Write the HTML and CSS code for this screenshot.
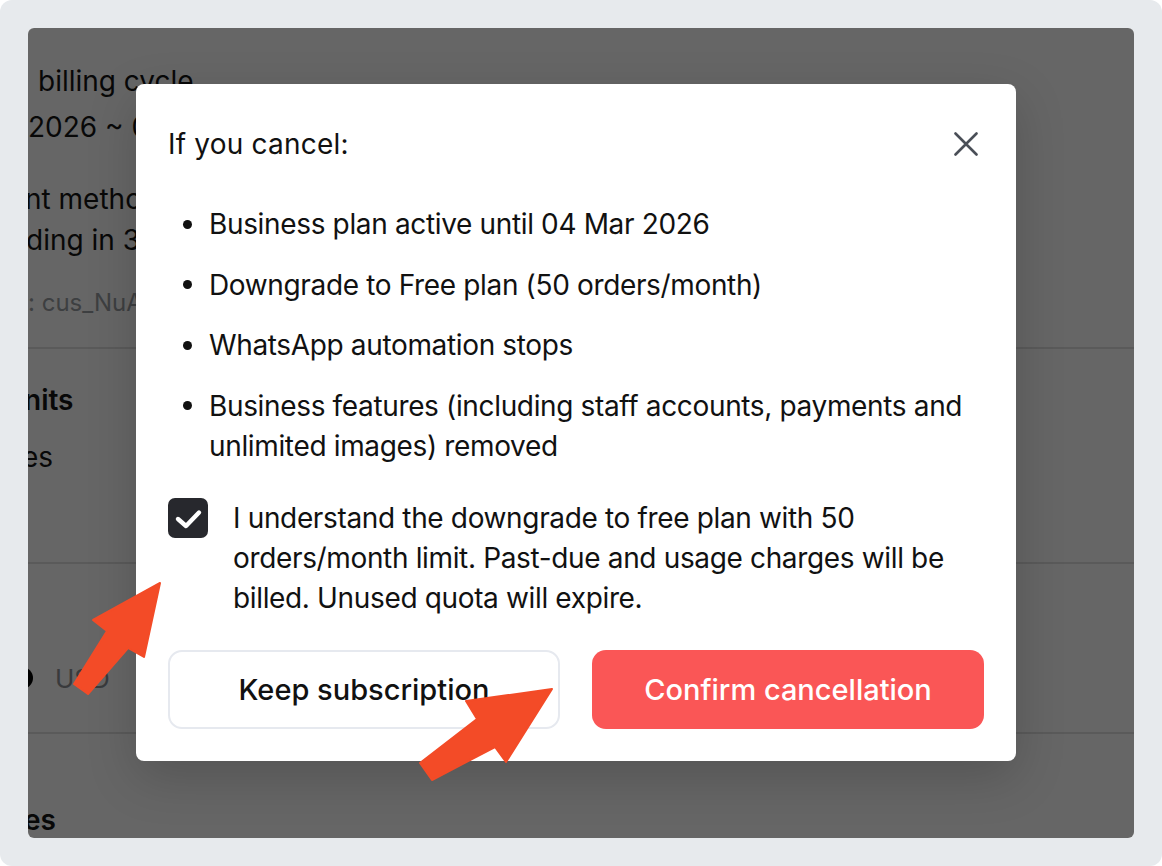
FILE: index.html
```html
<!DOCTYPE html>
<html lang="en">
<head>
<meta charset="utf-8">
<title>Cancel subscription</title>
<link rel="stylesheet" href="styles.css">
</head>
<body>
<div class="frame">
  <div class="app">
    <div class="bg-content">
      <div class="bg-section bg-billing">
        <div class="bg-line bg-first">billing cycle</div>
        <div class="bg-line bg-date">2026 ~ 04 Mar 2026</div>
        <div class="bg-line bg-method">nt method</div>
        <div class="bg-line bg-card">ding in 3456</div>
        <div class="bg-muted">: cus_NuA8xk2</div>
      </div>
      <div class="bg-section bg-limits">
        <div class="bg-heading">nits</div>
        <div class="bg-line bg-usage">es</div>
      </div>
      <div class="bg-section bg-currency">
        <div class="bg-radio-row"><span class="bg-radio"></span><span class="bg-muted-lg">USD</span></div>
      </div>
      <div class="bg-section bg-last">
        <div class="bg-heading">es</div>
      </div>
    </div>
    <div class="overlay">
      <div class="modal" role="dialog">
        <div class="modal-head">
          <h2 class="modal-title">If you cancel:</h2>
          <button class="close-btn" aria-label="Close">
            <svg width="24" height="24" viewBox="0 0 24 24"><path d="M1.5 1.5 L22.5 22.5 M22.5 1.5 L1.5 22.5" stroke="#4a4f57" stroke-width="2.6" stroke-linecap="round" fill="none"/></svg>
          </button>
        </div>
        <ul class="effects">
          <li>Business plan active until 04 Mar 2026</li>
          <li>Downgrade to Free plan (50 orders/month)</li>
          <li>WhatsApp automation stops</li>
          <li>Business features (including staff accounts, payments and unlimited images) removed</li>
        </ul>
        <label class="confirm-row">
          <span class="checkbox">
            <svg width="40" height="40" viewBox="0 0 40 40"><path d="M10 21 L18 28 L31 14.5" stroke="#fff" stroke-width="4.4" stroke-linecap="round" stroke-linejoin="round" fill="none"/></svg>
          </span>
          <span class="confirm-text">I understand the downgrade to free plan with 50 orders/month limit. Past-due and usage charges will be billed. Unused quota will expire.</span>
        </label>
        <div class="actions">
          <button class="btn btn-keep">Keep subscription</button>
          <button class="btn btn-danger">Confirm cancellation</button>
        </div>
      </div>
    </div>
  </div>
  <svg class="arrows" width="1162" height="866" viewBox="0 0 1162 866">
    <polygon points="74,684 107,631 93,620 160,583 144,657 128,648 88,694" fill="#f34b27" stroke="#f34b27" stroke-width="2" stroke-linejoin="round"/>
    <polygon points="420,763 477,719 466,701 552,689 506,762 495,747 432,780" fill="#f34b27" stroke="#f34b27" stroke-width="2" stroke-linejoin="round"/>
  </svg>
</div>
</body>
</html>
```
FILE: styles.css
```css
* { box-sizing: border-box; }
html, body { margin: 0; padding: 0; background: #ffffff; }
body { font-family: Inter, "Noto Sans", "Liberation Sans", sans-serif; color: #111; }

.frame {
  position: relative;
  width: 1162px;
  height: 866px;
  background: #e7eaed;
  border-radius: 12px;
  padding: 28px;
}

.app {
  position: relative;
  width: 1106px;
  height: 810px;
  background: #fff;
  border-radius: 6px;
  overflow: hidden;
}

/* background page (dimmed behind the dialog) */
.bg-content { font-size: 28px; color: #161616; white-space: nowrap; }
.bg-section { border-bottom: 2px solid #e2e2e2; }
.bg-line { line-height: 40px; }
.bg-billing { padding-top: 33px; }
.bg-first { margin-left: 10px; }
.bg-date { margin-top: 6px; }
.bg-method { margin-top: 32px; margin-left: -3px; }
.bg-card { margin-top: 1px; margin-left: -2px; }
.bg-muted { font-size: 24px; color: #9a9da2; margin-top: 23px; line-height: 40px; padding-bottom: 24px; }
.bg-limits { padding: 31px 0 85px 0; }
.bg-heading { font-weight: 600; line-height: 40px; margin-left: -4px; }
.bg-usage { margin-top: 17px; margin-left: -6px; }
.bg-currency { padding: 94px 0 34px 0; }
.bg-radio-row { display: flex; align-items: center; gap: 22px; height: 40px; }
.bg-radio { width: 22px; height: 22px; border-radius: 50%; background: #000; margin-left: -17px; }
.bg-muted-lg { font-size: 26px; color: #8e9196; }
.bg-last { border-bottom: none; padding-top: 66px; }

.overlay {
  position: absolute;
  inset: 0;
  background: rgba(0, 0, 0, 0.6);
  padding: 56px 0 0 108px;
}

.modal {
  width: 880px;
  height: 677px;
  background: #fff;
  border-radius: 8px;
  padding: 40px 32px 32px 32px;
  box-shadow: 0 16px 50px rgba(0, 0, 0, 0.18);
  font-size: 28px;
  line-height: 40px;
  letter-spacing: -0.35px;
  color: #111;
}

.modal-head { display: flex; align-items: center; justify-content: space-between; height: 40px; }
.modal-title { margin: 0; font-size: 28px; font-weight: 400; line-height: 40px; letter-spacing: 0.2px; }
.close-btn {
  width: 40px; height: 40px; border: 0; background: none; padding: 0;
  display: flex; align-items: center; justify-content: center; margin-right: -2px;
}

.effects { list-style: none; margin: 40px 0 0 0; padding: 0; }
.effects li { position: relative; padding-left: 41px; }
.effects li + li { margin-top: 20.67px; }
.effects li::before {
  content: "";
  position: absolute;
  left: 15px;
  top: 15.5px;
  width: 9px;
  height: 9px;
  border-radius: 50%;
  background: #111;
}

.confirm-row { display: flex; gap: 25px; margin-top: 32px; }
.checkbox {
  flex: none;
  width: 40px; height: 40px;
  border-radius: 7px;
  background: #27282d;
  display: block;
}
.checkbox svg { display: block; }
.confirm-text { flex: 1; }

.actions { display: grid; grid-template-columns: 1fr 1fr; gap: 32px; margin-top: 32px; }
.btn {
  height: 79px;
  border-radius: 14px;
  font-family: inherit;
  font-size: 29px;
  font-weight: 500;
  letter-spacing: 0;
  cursor: pointer;
}
.btn-keep { background: #fff; border: 2px solid #e6e9ef; color: #111; }
.btn-danger { background: #fa5656; border: 0; color: #fff; }

.arrows { position: absolute; left: 0; top: 0; pointer-events: none; }
```
